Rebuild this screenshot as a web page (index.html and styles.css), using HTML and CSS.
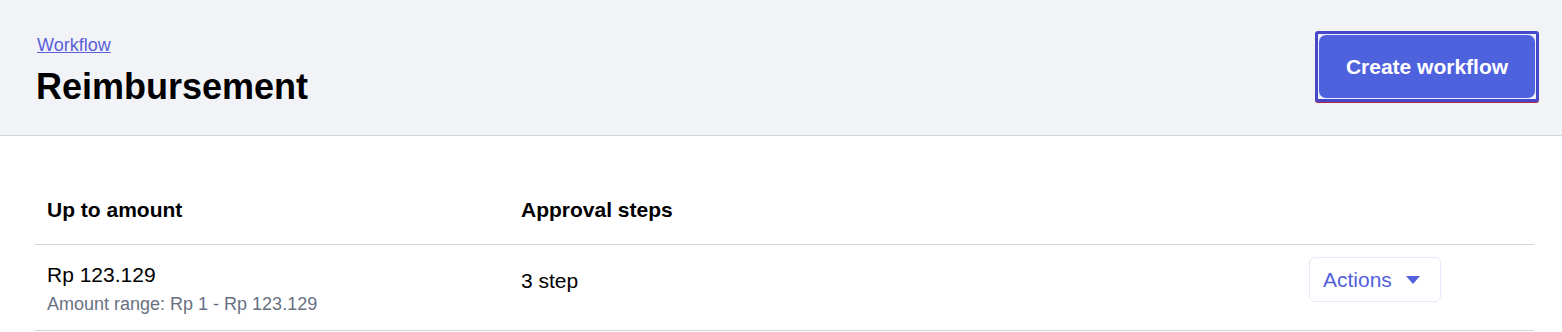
FILE: index.html
```html
<!DOCTYPE html>
<html lang="en">
<head>
<meta charset="utf-8">
<title>Reimbursement</title>
<link rel="stylesheet" href="styles.css">
</head>
<body>
<header class="page-header">
  <div class="title-block">
    <a class="breadcrumb" href="#">Workflow</a>
    <h1 class="page-title">Reimbursement</h1>
  </div>
  <button class="btn-primary" type="button"><span class="btn-primary-face">Create workflow</span></button>
</header>
<main class="content">
  <table class="workflow-table">
    <colgroup>
      <col class="col-amount">
      <col class="col-steps">
      <col class="col-actions">
    </colgroup>
    <thead>
      <tr>
        <th>Up to amount</th>
        <th>Approval steps</th>
        <th></th>
      </tr>
    </thead>
    <tbody>
      <tr>
        <td>
          <div class="amount">Rp 123.129</div>
          <div class="amount-range">Amount range: Rp 1 - Rp 123.129</div>
        </td>
        <td><div class="steps">3 step</div></td>
        <td>
          <button class="btn-actions" type="button">Actions
            <svg class="caret" width="14" height="8" viewBox="0 0 14 8" aria-hidden="true"><path d="M0 0 H14 L7 8 Z" fill="currentColor"/></svg>
          </button>
        </td>
      </tr>
    </tbody>
  </table>
</main>
</body>
</html>
```
FILE: styles.css
```css
* { box-sizing: border-box; }

html, body {
  margin: 0;
  padding: 0;
  background: #ffffff;
  font-family: "Liberation Sans", Arial, sans-serif;
  color: #000000;
}

.page-header {
  display: flex;
  justify-content: space-between;
  align-items: flex-start;
  height: 136px;
  padding: 33px 23px 0 35px;
  background: #f2f3f7;
  border-bottom: 1px solid #d6d7dd;
}

.title-block {
  display: flex;
  flex-direction: column;
  align-items: flex-start;
}

.breadcrumb {
  font-size: 18px;
  line-height: 24px;
  color: #5a60d8;
  text-decoration: underline;
  margin-left: 2px;
}

.page-title {
  margin: 8px 0 0 1px;
  font-size: 36px;
  line-height: 44px;
  font-weight: 700;
}

.btn-primary {
  margin-top: -2px;
  width: 224px;
  height: 71px;
  padding: 1px;
  border: 3px solid #4448c9;
  border-radius: 3px;
  background: #eceefb;
  box-shadow: 0 1px 0 0 #b0254a;
  font-family: "Liberation Sans", Arial, sans-serif;
  cursor: pointer;
}

.btn-primary-face {
  display: flex;
  align-items: center;
  justify-content: center;
  width: 100%;
  height: 100%;
  border-radius: 7px;
  background: #4f62de;
  color: #ffffff;
  font-size: 21px;
  font-weight: 700;
}

.content {
  padding: 40px 28px 0 35px;
}

.workflow-table {
  width: 1499px;
  border-collapse: collapse;
  table-layout: fixed;
}

.col-amount { width: 474px; }
.col-steps { width: 788px; }
.col-actions { width: 237px; }

.workflow-table th {
  text-align: left;
  font-size: 21px;
  line-height: 24px;
  font-weight: 700;
  padding: 22px 12px 22px;
}

.workflow-table thead tr,
.workflow-table tbody tr {
  border-bottom: 1px solid #d2d5dc;
}

.workflow-table td {
  vertical-align: top;
  padding: 12px 12px 14px;
}

.amount {
  font-size: 21px;
  line-height: 35px;
}

.amount-range {
  font-size: 18px;
  line-height: 24px;
  color: #687083;
}

.steps {
  font-size: 21px;
  line-height: 48px;
}

.btn-actions {
  display: inline-flex;
  align-items: center;
  gap: 14px;
  height: 45px;
  width: 132px;
  padding: 0 20px 0 13px;
  border: 1px solid #e5e7fb;
  border-radius: 6px;
  background: #ffffff;
  color: #5260dc;
  font-family: "Liberation Sans", Arial, sans-serif;
  font-size: 21px;
  cursor: pointer;
}

.caret {
  display: block;
  flex: none;
}
```
